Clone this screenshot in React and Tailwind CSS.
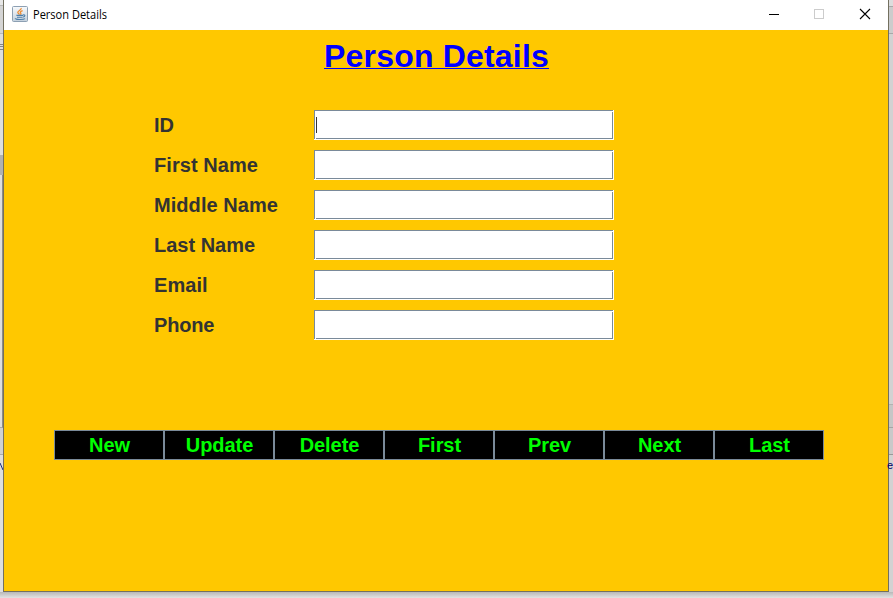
import React from "react";

const rows = [
  { label: "ID", tracking: "tracking-normal" },
  { label: "First Name", tracking: "tracking-[0.06px]" },
  { label: "Middle Name", tracking: "tracking-[0.06px]" },
  { label: "Last Name", tracking: "tracking-normal" },
  { label: "Email", tracking: "tracking-[0.06px]" },
  { label: "Phone", tracking: "tracking-[-0.2px]" },
];
const actions = ["New", "Update", "Delete", "First", "Prev", "Next", "Last"];

function JavaIcon() {
  return (
    <svg width="16" height="16" viewBox="0 0 16 16" fill="none">
      <defs>
        <linearGradient id="tile" x1="0" y1="0" x2="0" y2="1">
          <stop offset="0" stopColor="#f8fafc" />
          <stop offset="1" stopColor="#c3d0dc" />
        </linearGradient>
      </defs>
      <rect x="0.5" y="0.5" width="15" height="15" rx="1" fill="url(#tile)" stroke="#8da0b3" />
      <path d="M9.2 2C9.8 4.2 5.4 4.6 5.8 6.5C6 7.3 7.2 7.7 7.4 8.6M10.6 4.6C8.2 5.6 7.8 6.3 8.7 7.1C9.2 7.8 8.9 8.4 8.4 8.8" stroke="#ef8a2d" strokeWidth="1.3" />
      <path d="M4.4 9.4H11M11.1 8.9C13.6 8.6 13.2 10.7 11 11M5 11.2H10.6M3.4 12.2C2.4 13.8 11.5 14 13 12.6" stroke="#4d7faa" strokeWidth="1.1" />
    </svg>
  );
}

function TextField({ focused }) {
  return (
    <div className="h-[30px] w-[300px] border-b border-r border-white bg-white">
      <div className="flex h-[29px] w-[299px] flex-col">
        <div className="h-px bg-[#7a8a99]" />
        <div className="flex h-7">
          <div className="w-px bg-[#7a8a99]" />
          <div className="flex grow flex-col">
            <div className="flex h-[27px] items-center pl-px">
              {focused && <span className="h-4 w-px bg-[#333333]" />}
            </div>
            <div className="ml-px h-px bg-[#7a8a99]" />
          </div>
          <div className="mt-px w-px bg-[#7a8a99]" />
        </div>
      </div>
    </div>
  );
}

function BackgroundLeft() {
  return (
    <div className="flex w-[3px] shrink-0 flex-col overflow-hidden bg-[#dedede]">
      <div className="h-[6px] shrink-0 border-b border-[#b8b8b8] bg-[#e8e8e8]" />
      <div className="h-[28px] shrink-0 border-b border-[#b8b8b8] bg-[#d5d5d5]" />
      <div className="mt-[10px] h-[6px] shrink-0 border-y border-[#858585]">
        <div className="mt-px h-px bg-[#858585]" />
      </div>
      <div className="mt-[25px] h-[20px] shrink-0 bg-[#e2e4c9]" />
      <div className="mt-[60px] h-[20px] shrink-0 bg-[#b1b1b1]" />
      <div className="h-[253px] shrink-0 border-b border-r border-b-[#aaaaaa] border-r-[#8b8b8b]" />
      <div className="h-[27px] shrink-0 border-b border-[#aaaaaa] bg-[#d0d0d0]" />
      <svg className="mt-[7px] shrink-0" width="3" height="10" fill="none">
        <path d="M0 1L3 8" stroke="#172a80" />
      </svg>
    </div>
  );
}

function BackgroundRight() {
  return (
    <div className="flex w-1 shrink-0 flex-col bg-[#d2d2d2]">
      <div className="h-[7px] shrink-0 border-b border-[#a8a8a8] bg-[#dddddd]" />
      <div className="h-[27px] shrink-0 border-b border-[#a8a8a8] bg-[#cccccc]" />
      <div className="h-[371px] shrink-0 border-b border-[#b2b2b2]" />
      <div className="h-[23px] shrink-0 border-b border-[#a5a5a5] bg-[#c6c6c6]" />
      <div className="h-[27px] shrink-0 border-b border-[#999999] bg-[#c9c9c9]" />
      <div className="mt-[3px] h-[14px] shrink-0 text-[11px] leading-[14px] text-[#000066]">
        <span className="-ml-[2px]">e</span>
      </div>
    </div>
  );
}

export default function App() {
  return (
    <div className="flex h-[598px] w-[893px] flex-col overflow-hidden bg-[#dedede] font-['Liberation_Sans',Arial,sans-serif]">
      <div className="flex h-[592px] shrink-0">
        <BackgroundLeft />
        <main className="flex w-[886px] shrink-0 flex-col border-x border-b border-[#73705f] bg-[#ffc800]">
          <header className="flex h-[30px] shrink-0 items-center bg-white pl-2">
            <div className="-mt-0.5 h-4 w-4"><JavaIcon /></div>
            <svg className="ml-[5px]" width="80" height="30">
              <text x="0" y="19" textLength="74" lengthAdjust="spacingAndGlyphs" fontFamily="Open Sans, Noto Sans, sans-serif" fontSize="12" fill="#000">Person Details</text>
            </svg>
            <svg className="ml-auto" width="130" height="30" fill="none" shapeRendering="crispEdges">
              <path d="M11 14.5H21" stroke="#000" />
              <rect x="56.5" y="9.5" width="9" height="9" stroke="#cccccc" />
              <path d="M102 9L112 19M112 9L102 19" stroke="#000" shapeRendering="auto" strokeWidth="1.1" />
            </svg>
          </header>
          <h1 className="ml-[320px] mt-2 flex h-9 w-[225px] shrink-0 flex-col whitespace-nowrap text-[32px] font-bold leading-[36px] tracking-[0.19px] text-[#0000ff]">
            <span className="h-[30px]">Person Details</span>
            <span className="h-px shrink-0 bg-[#0000ff]" />
          </h1>
          <section className="ml-[150px] mt-[36px] flex w-[460px] shrink-0 flex-col gap-[10px]">
            {rows.map((row, i) => (
              <div key={row.label} className="flex h-[30px] items-center">
                <div className={`w-[160px] whitespace-nowrap text-[20px] font-bold leading-[30px] text-[#333333] ${row.tracking}`}>{row.label}</div>
                <TextField focused={i === 0} />
              </div>
            ))}
          </section>
          <div className="ml-[50px] mt-[90px] flex shrink-0">
            {actions.map((action) => (
              <button key={action} type="button" className="h-[30px] w-[110px] border border-[#7a8a99] bg-black pl-px text-center text-[20px] font-bold leading-[28px] tracking-[-0.05px] text-[#00ff00]">
                {action}
              </button>
            ))}
          </div>
        </main>
        <BackgroundRight />
      </div>
      <div className="h-[6px] bg-gradient-to-b from-[#b8b8b8] to-[#e3e3e3]" />
    </div>
  );
}
